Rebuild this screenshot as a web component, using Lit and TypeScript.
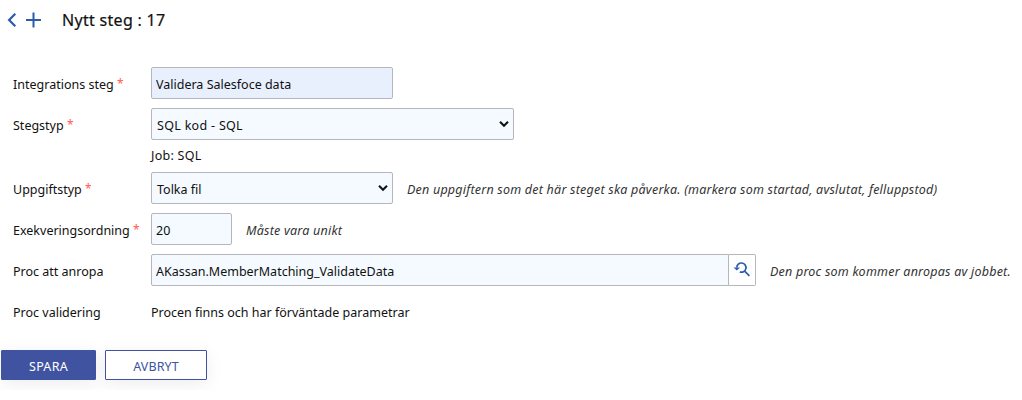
import { LitElement, html, css, nothing } from "lit";
import { customElement, property } from "lit/decorators.js";

@customElement("form-row")
class FormRow extends LitElement {
  @property() label = "";
  @property({ type: Boolean }) required = false;
  static styles = css`
    :host { display: grid; grid-template-columns: 138px 1fr; height: 32px; align-items: center; white-space: nowrap; }
    .label { padding-top: 3px; }
    .star { color: #ff5a52; font-size: 12px; line-height: 1; vertical-align: 1px; }
    .field { display: flex; align-items: center; height: 32px; }
  `;
  render() {
    return html`<span class="label">${this.label}${this.required ? html` <span class="star">*</span>` : nothing}</span>
      <div class="field"><slot></slot></div>`;
  }
}

@customElement("app-root")
class AppRoot extends LitElement {
  static styles = css`
    :host { display: block; width: 1022px; height: 400px; overflow: hidden; background: #fff; color: #111; font: 12.5px/18px "Noto Sans", "Open Sans", sans-serif; }
    header { display: flex; align-items: center; height: 40px; padding-left: 6px; box-sizing: border-box; }
    header svg { display: block; margin-bottom: 1px; }
    .plus { margin-left: 9px; }
    h1 { margin: 0 0 0 20px; font-size: 16px; font-weight: 400; line-height: 22px; letter-spacing: 0.3px; white-space: nowrap; -webkit-text-stroke: 0.2px #111; }
    form { display: flex; flex-direction: column; gap: 9px; padding: 27px 0 0 13px; }
    .box { box-sizing: border-box; height: 32px; border: 1px solid #b4b6ba; border-radius: 2px; background: #f4faff; color: #111; font: inherit; padding: 2px 4px 0; outline: none; flex: none; }
    .name { width: 242px; background: #e8f0fe; }
    .order { width: 81px; }
    .proc { width: 578px; border-radius: 2px 0 0 2px; }
    .choice { display: flex; align-items: center; justify-content: space-between; padding: 3px 4px 0 5px; }
    .wide { width: 363px; letter-spacing: 0.3px; }
    .mid { width: 242px; }
    .choice svg { margin-bottom: 3px; }
    .sub { height: 14px; line-height: 14px; margin-left: 138px; letter-spacing: 0.25px; }
    .hint { font-style: italic; letter-spacing: 0.22px; margin-left: 14px; padding-top: 3px; color: #333; }
    .plain { padding-top: 3px; }
    .find { box-sizing: border-box; width: 27px; height: 32px; padding: 0; border: 1px solid #b4b6ba; border-left: 0; border-radius: 0 2px 2px 0; background: #fff; display: grid; place-items: center; }
    .find svg { display: block; margin-bottom: 3px; }
    .actions { display: flex; gap: 9px; width: 230px; height: 63px; align-items: flex-start; box-sizing: border-box; overflow: hidden; padding: 23px 0 0 1px; }
    .btn { box-sizing: border-box; height: 30px; border: 1px solid #4053a0; border-radius: 1px; font: inherit; padding: 3px 0 0; box-shadow: 0 4px 18px rgba(0, 0, 0, 0.07); }
    .save { width: 95px; background: #4053a0; color: #fff; letter-spacing: 0.3px; }
    .cancel { width: 102px; background: #fff; color: #4053a0; letter-spacing: 0.1px; }
  `;

  private arrow() {
    return html`<svg width="10" height="8" viewBox="0 0 10 8"><path d="M1 1.8 5 5.8 9 1.8" fill="none" stroke="#111" stroke-width="2"/></svg>`;
  }

  render() {
    return html`
      <header>
        <svg width="11" height="16" viewBox="0 0 11 16"><path d="M9.3 1.8 3.1 8l6.2 6.2" fill="none" stroke="#2a5caa" stroke-width="2.2"/></svg>
        <svg class="plus" width="16" height="16" viewBox="0 0 16 16"><path d="M7.5 .5v15M0 8h15" fill="none" stroke="#2a5caa" stroke-width="2"/></svg>
        <h1>Nytt steg : 17</h1>
      </header>
      <form>
        <form-row label="Integrations steg" required><input class="box name" .value=${"Validera Salesfoce data"} /></form-row>
        <form-row label="Stegstyp" required><div class="box choice wide">SQL kod - SQL${this.arrow()}</div></form-row>
        <div class="sub">Job: SQL</div>
        <form-row label="Uppgiftstyp" required><div class="box choice mid">Tolka fil${this.arrow()}</div>
          <span class="hint">Den uppgiftern som det här steget ska påverka. (markera som startad, avslutat, felluppstod)</span></form-row>
        <form-row label="Exekveringsordning" required><input class="box order" .value=${"20"} /><span class="hint">Måste vara unikt</span></form-row>
        <form-row label="Proc att anropa"><input class="box proc" .value=${"AKassan.MemberMatching_ValidateData"} />
          <button class="find" type="button" aria-label="Sök"><svg width="18" height="16" viewBox="0 0 18 16" fill="none" stroke="#2a5caa"><path d="M3.8 6.6A4.6 4.6 0 1 1 6.8 10.9M11.4 9.8l5 5" stroke-width="1.7"/><path d="M.6 6.4h6.4L3.8 9.6Z" fill="#2a5caa" stroke="none"/></svg></button>
          <span class="hint">Den proc som kommer anropas av jobbet.</span></form-row>
        <form-row label="Proc validering"><span class="plain">Procen finns och har förväntade parametrar</span></form-row>
      </form>
      <div class="actions"><button class="btn save">SPARA</button><button class="btn cancel">AVBRYT</button></div>
    `;
  }
}
